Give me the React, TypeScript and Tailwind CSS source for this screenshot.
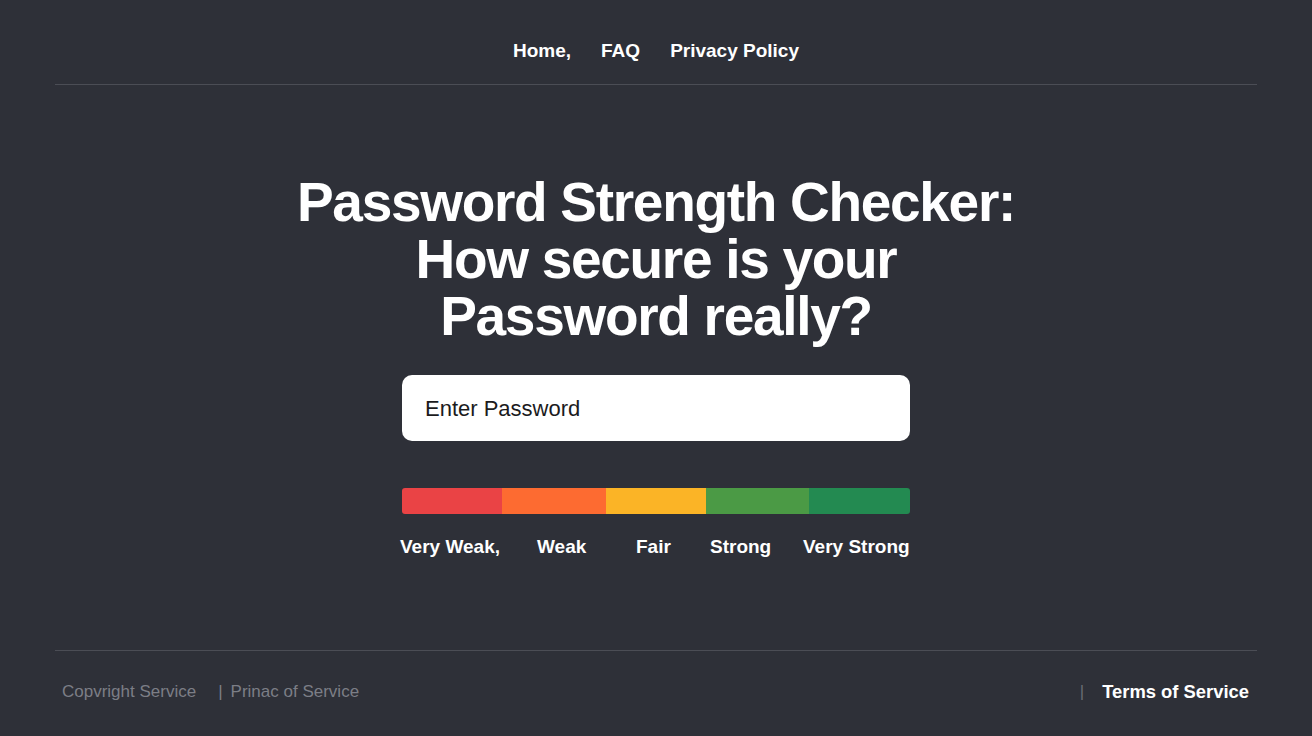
import React from "react";

const SEGMENTS = [
  { color: "bg-[#ea4345]", width: "w-[100px]" },
  { color: "bg-[#fd6b31]", width: "w-[104px]" },
  { color: "bg-[#fbb426]", width: "w-[100px]" },
  { color: "bg-[#4b9a45]", width: "w-[103px]" },
  { color: "bg-[#238a51]", width: "flex-1" },
];

// label boxes line up with the text starts in the design
const LABELS = [
  { text: "Very Weak,", width: "w-[137px]" },
  { text: "Weak", width: "w-[99px]" },
  { text: "Fair", width: "w-[74px]" },
  { text: "Strong", width: "w-[93px]" },
  { text: "Very Strong", width: "w-[109px]" },
];

const App: React.FC = () => {
  return (
    <div
      className="w-full h-[736px] bg-[#2e3038] text-white flex flex-col px-[55px] overflow-hidden"
      style={{ fontFamily: '"Liberation Sans", Arial, sans-serif' }}
    >
      <nav className="h-[85px] flex items-start justify-center gap-[30px] text-[19px] leading-[20px] font-bold pt-[41px] border-b border-[#4b4d55]">
        <a className="text-white">Home,</a>
        <a className="text-white">FAQ</a>
        <a className="text-white">Privacy Policy</a>
      </nav>

      <main className="flex-1 flex flex-col items-center pt-[89px]">
        <h1 className="text-[55px] leading-[57px] font-bold text-center tracking-[-1.3px] whitespace-nowrap">
          Password Strength Checker:
          <br />
          How secure is your
          <br />
          Password really?
        </h1>

        <div className="mt-[30px] w-[508px] h-[66px] bg-white rounded-[10px] flex items-center px-[23px]">
          <span className="text-[22px] text-[#1b1b1d]">Enter Password</span>
        </div>

        <div className="mt-[47px] w-[508px] h-[26px] rounded-[3px] overflow-hidden flex">
          {SEGMENTS.map((s, i) => (
            <div key={i} className={`${s.color} ${s.width} h-full`} />
          ))}
        </div>

        <div className="mt-[19px] w-[512px] flex text-[19px] font-bold">
          {LABELS.map((l) => (
            <span key={l.text} className={`${l.width} shrink-0 whitespace-nowrap`}>
              {l.text}
            </span>
          ))}
        </div>
      </main>

      <footer className="h-[86px] border-t border-[#4b4d55] flex items-center justify-between text-[17px] pb-[3px]">
        <div className="flex items-center text-[#7c7e86] pl-[7px]">
          <span>Copvright Service</span>
          <span className="ml-[22px] mr-[8px]">|</span>
          <span>Prinac of Service</span>
        </div>
        <div className="flex items-center pr-[8px]">
          <span className="text-[#6b6d75] mr-[18px]">|</span>
          <span className="font-bold text-white text-[18.4px]">Terms of Service</span>
        </div>
      </footer>
    </div>
  );
};

export default App;
